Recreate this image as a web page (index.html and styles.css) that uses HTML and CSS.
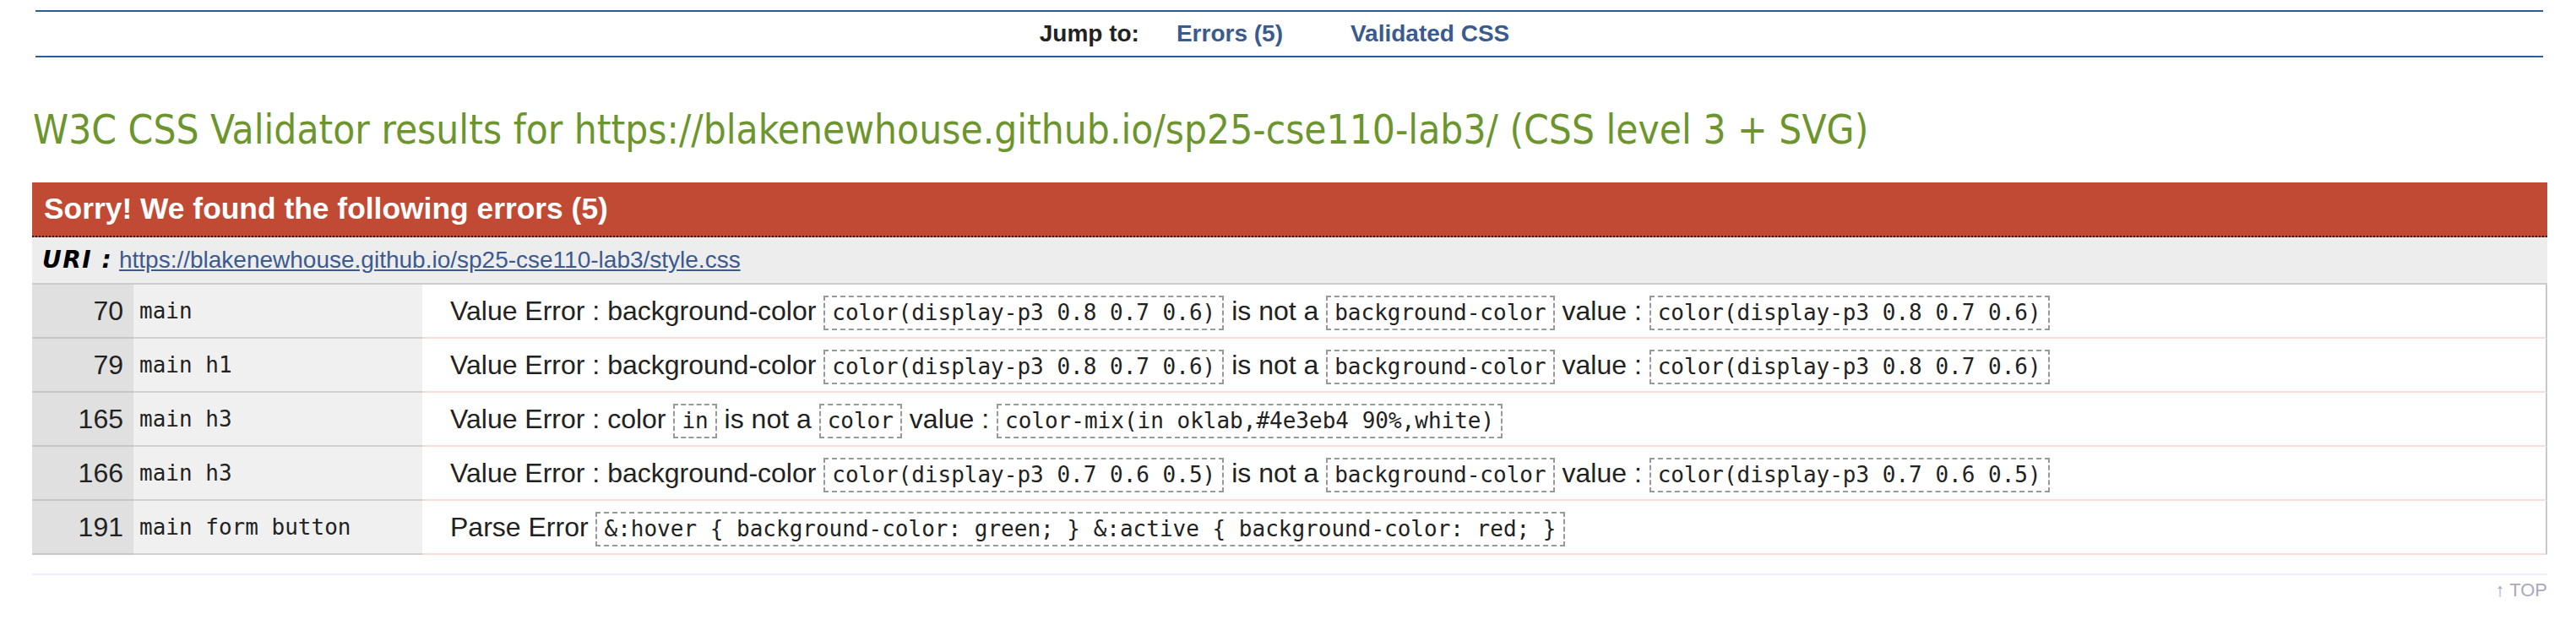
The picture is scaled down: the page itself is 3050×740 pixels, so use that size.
FILE: index.html
```html
<!DOCTYPE html>
<html lang="en">
<head>
<meta charset="utf-8">
<title>W3C CSS Validator results</title>
<link rel="stylesheet" href="styles.css">
</head>
<body>
<nav class="jumpbar">
  <span class="jump-label">Jump to:</span>
  <a class="jump-link" href="#errors">Errors (5)</a>
  <a class="jump-link jump-link-last" href="#css">Validated CSS</a>
</nav>
<h2 class="results-title">W3C CSS Validator results for https://blakenewhouse.github.io/sp25-cse110-lab3/ (CSS level 3 + SVG)</h2>
<section class="errors" id="errors">
  <h3 class="errors-head">Sorry! We found the following errors (5)</h3>
  <h4 class="uri-row"><span class="uri-label">URI :</span> <a class="uri-link" href="#">https://blakenewhouse.github.io/sp25-cse110-lab3/style.css</a></h4>
  <table class="error-table">
    <tr>
      <td class="line">70</td>
      <td class="ctx">main</td>
      <td class="msg">Value Error : background-color <span class="val">color(display-p3 0.8 0.7 0.6)</span> is not a <span class="val">background-color</span> value : <span class="val">color(display-p3 0.8 0.7 0.6)</span></td>
    </tr>
    <tr>
      <td class="line">79</td>
      <td class="ctx">main h1</td>
      <td class="msg">Value Error : background-color <span class="val">color(display-p3 0.8 0.7 0.6)</span> is not a <span class="val">background-color</span> value : <span class="val">color(display-p3 0.8 0.7 0.6)</span></td>
    </tr>
    <tr>
      <td class="line">165</td>
      <td class="ctx">main h3</td>
      <td class="msg">Value Error : color <span class="val">in</span> is not a <span class="val">color</span> value : <span class="val">color-mix(in oklab,#4e3eb4 90%,white)</span></td>
    </tr>
    <tr>
      <td class="line">166</td>
      <td class="ctx">main h3</td>
      <td class="msg">Value Error : background-color <span class="val">color(display-p3 0.7 0.6 0.5)</span> is not a <span class="val">background-color</span> value : <span class="val">color(display-p3 0.7 0.6 0.5)</span></td>
    </tr>
    <tr>
      <td class="line">191</td>
      <td class="ctx">main form button</td>
      <td class="msg">Parse Error <span class="val">&amp;:hover { background-color: green; } &amp;:active { background-color: red; }</span></td>
    </tr>
  </table>
  <div class="errors-rule"></div>
  <p class="backtop"><a class="backtop-link" href="#">↑ TOP</a></p>
</section>
</body>
</html>
```
FILE: styles.css
```css
html, body {
  margin: 0;
  padding: 0;
  background: #ffffff;
}

body {
  font-family: "Liberation Sans", Arial, sans-serif;
  color: #222222;
}

/* Jump bar */
.jumpbar {
  margin: 12px 39px 0 42px;
  height: 52px;
  border-top: 2px solid #2c5a99;
  border-bottom: 2px solid #2c5a99;
  display: flex;
  justify-content: center;
  align-items: center;
  padding-right: 35px;
  font-size: 28px;
  font-weight: bold;
}

.jump-label {
  color: #222222;
  margin-right: 44px;
}

.jump-link {
  color: #3b5a8f;
  text-decoration: none;
}

.jump-link-last {
  margin-left: 80px;
}

/* Title */
.results-title {
  margin: 58px 0 34px 39px;
  font-family: "DejaVu Sans Condensed", "DejaVu Sans", sans-serif;
  font-stretch: condensed;
  font-weight: normal;
  font-size: 47.4px;
  line-height: 56px;
  color: #6d952d;
  white-space: nowrap;
}

/* Errors block */
.errors {
  margin: 0 34px 0 38px;
}

.errors-head {
  margin: 0;
  height: 63px;
  line-height: 63px;
  padding-left: 14px;
  font-size: 35.4px;
  font-weight: bold;
  color: #ffffff;
  background: #c14a34;
  border-bottom: 2px dotted #1c1c1c;
}

.uri-row {
  margin: 0;
  height: 54px;
  line-height: 54px;
  padding-left: 12px;
  font-size: 28px;
  font-weight: normal;
  background: #ededed;
  border-bottom: 2px solid #cccccc;
  white-space: nowrap;
}

.uri-label {
  font-family: "DejaVu Sans", sans-serif;
  font-weight: bold;
  font-style: italic;
  letter-spacing: 1.5px;
  color: #000000;
}

.uri-link {
  color: #3b5a8f;
  text-decoration: underline;
}

/* Table */
.error-table {
  width: 100%;
  border-collapse: separate;
  border-spacing: 0;
  table-layout: fixed;
}

.error-table td {
  padding: 0;
  line-height: 62px;
  vertical-align: middle;
  border-bottom: 2px solid #cccccc;
  white-space: nowrap;
}

.line {
  width: 120px;
  box-sizing: border-box;
  padding-right: 12px !important;
  text-align: right;
  font-size: 32px;
  background: #e0e0e0;
  border-bottom-color: #c8c8c8 !important;
}

.ctx {
  width: 342px;
  box-sizing: border-box;
  padding-left: 7px !important;
  font-family: "DejaVu Sans Mono", "Liberation Mono", monospace;
  font-size: 26px;
  background: #f0f0f0;
  border-bottom-color: #d0d0d0 !important;
}

.msg {
  padding-left: 33px !important;
  font-size: 32px;
  background: #ffffff;
  border-bottom-color: #f5dfda !important;
  border-right: 2px solid #c8c8c8;
}

.val {
  display: inline-block;
  line-height: 37px;
  padding: 0 8px;
  font-family: "DejaVu Sans Mono", "Liberation Mono", monospace;
  font-size: 26px;
  border: 2px dashed #999999;
}

.errors-rule {
  margin-top: 22px;
  height: 2px;
  background: #eeeeff;
}

.backtop {
  margin: 5px 0 0 0;
  text-align: right;
  font-size: 22px;
  line-height: 26px;
}

.backtop-link {
  color: #aaaabb;
  text-decoration: none;
}
```
